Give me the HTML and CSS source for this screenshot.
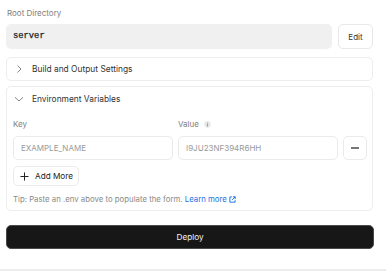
FILE: index.html
```html
<!DOCTYPE html>
<html lang="en">

<head>
    <meta charset="UTF-8">
    <meta name="viewport" content="width=device-width, initial-scale=1.0">
    <title>deploy settings</title>
    <link rel="stylesheet" href="styles.css">
</head>

<body>
    <div class="container">
        <p class="label root_label">Root Directory</p>
        <div class="root_row">
            <div class="root_input">server</div>
            <button type="button" class="edit_btn">Edit</button>
        </div>

        <div class="panel">
            <div class="panel_head">
                <svg class="chev" width="10" height="10" viewBox="0 0 10 10">
                    <path d="M3.5 1.5 L7 5 L3.5 8.5" fill="none" stroke="#777" stroke-width="0.9"/>
                </svg>
                <span>Build and Output Settings</span>
            </div>
        </div>

        <div class="panel env">
            <div class="panel_head">
                <svg class="chev" width="10" height="10" viewBox="0 0 10 10">
                    <path d="M1 3.3 L5 7 L9 3.3" fill="none" stroke="#777" stroke-width="0.9"/>
                </svg>
                <span>Environment Variables</span>
            </div>
            <div class="env_body">
                <div class="env_labels">
                    <p class="label">Key</p>
                    <p class="label">Value
                        <svg class="info" width="7" height="7" viewBox="0 0 8 8">
                            <circle cx="4" cy="4" r="3.6" fill="#e6e6e6"/>
                            <rect x="3.55" y="3.4" width="0.9" height="2.8" fill="#888"/>
                            <rect x="3.55" y="1.8" width="0.9" height="0.9" fill="#888"/>
                        </svg>
                    </p>
                    <span></span>
                </div>
                <div class="env_row">
                    <div class="field placeholder">EXAMPLE_NAME</div>
                    <div class="field placeholder">I9JU23NF394R6HH</div>
                    <button type="button" class="minus_btn"><span class="minus"></span></button>
                </div>
                <button type="button" class="add_btn">
                    <svg width="9" height="9" viewBox="0 0 10 10">
                        <path d="M5 0.5 V9.5 M0.5 5 H9.5" stroke="#222" stroke-width="1.1"/>
                    </svg>
                    Add More
                </button>
                <p class="tip">Tip: Paste an .env above to populate the form. <a href="#">Learn more
                    <svg width="7" height="7" viewBox="0 0 8 8">
                        <path d="M3.2 1 H1 V7 H7 V4.8" fill="none" stroke="#1a73e8" stroke-width="1.1"/>
                        <path d="M4.4 0.9 H7.1 V3.6 M7 1 L3.6 4.4" fill="none" stroke="#1a73e8" stroke-width="1.1"/>
                    </svg></a></p>
            </div>
        </div>

        <button type="button" class="deploy_btn">Deploy</button>
    </div>
    <div class="bottom_bar"></div>
</body>

</html>
```

FILE: styles.css
```css
body {
    margin: 0;
    background-color: white;
    font-family: Inter, "Liberation Sans", sans-serif;
    color: #333;
    height: 271px;
    overflow: hidden;
}

.container {
    width: 367px;
    padding: 8px 0 0 6px;
}

p {
    margin: 0;
}

.label {
    font-size: 8px;
    line-height: 10px;
    color: #808080;
    height: 10px;
}

.root_label {
    padding-left: 1px;
}

.root_row {
    display: flex;
    gap: 6px;
    margin-top: 6px;
    height: 25px;
}

.root_input {
    flex: 1;
    background-color: #f0f0f0;
    border-radius: 5px;
    font-family: "Liberation Mono", monospace;
    font-size: 8.8px;
    color: #222;
    line-height: 25px;
    padding-left: 7px;
    -webkit-text-stroke: 0.25px #222;
}

.edit_btn {
    width: 35px;
    height: 25px;
    border: 1px solid #e8e8e8;
    border-radius: 5px;
    background-color: white;
    font-family: inherit;
    font-size: 8px;
    color: #333;
    padding: 0;
}

.panel {
    margin-top: 8px;
    border: 1px solid #ededed;
    border-radius: 5px;
}

.panel_head {
    display: flex;
    align-items: center;
    height: 22px;
    padding-left: 7px;
    font-size: 8.4px;
    color: #333;
}

.chev {
    margin-right: 8px;
}

.env {
    margin-top: 5px;
    height: 123px;
}

.env .panel_head {
    height: 24px;
}

.env_body {
    padding: 8px 7px 0 6px;
}

.env_labels {
    display: grid;
    grid-template-columns: 160px 164px 24px;
    gap: 5px;
}

.info {
    margin-left: 3px;
    vertical-align: -0.5px;
}

.env_row {
    display: grid;
    grid-template-columns: 160px 160px 24px;
    gap: 5px;
    margin-top: 7px;
    height: 24px;
}

.field {
    border: 1px solid #ebebeb;
    border-radius: 5px;
    font-size: 8px;
    line-height: 22px;
    padding-left: 7px;
}

.placeholder {
    color: #9a9a9a;
}

.minus_btn {
    border: 1px solid #ebebeb;
    border-radius: 5px;
    background-color: white;
    padding: 0;
    display: flex;
    align-items: center;
    justify-content: center;
}

.minus {
    width: 8px;
    height: 1.2px;
    background-color: #777;
}

.add_btn {
    display: flex;
    align-items: center;
    gap: 6px;
    margin-top: 6px;
    height: 20px;
    width: 66px;
    padding: 0 0 0 6px;
    border: 1px solid #ebebeb;
    border-radius: 5px;
    background-color: white;
    font-family: inherit;
    font-size: 8.2px;
    color: #222;
}

.tip {
    margin-top: 8px;
    font-size: 7.8px;
    color: #8a8a8a;
    line-height: 10px;
}

.tip a {
    color: #1a73e8;
    text-decoration: none;
}

.tip svg {
    vertical-align: -0.5px;
}

.deploy_btn {
    display: block;
    width: 368px;
    height: 24px;
    margin-top: 14px;
    background-color: #171717;
    border: 1px solid #4a4a4a;
    border-radius: 5px;
    color: #f2f2f2;
    font-family: inherit;
    font-size: 8.2px;
}

.bottom_bar {
    margin-top: 20px;
    height: 4px;
    background-color: #ededed;
}
```
